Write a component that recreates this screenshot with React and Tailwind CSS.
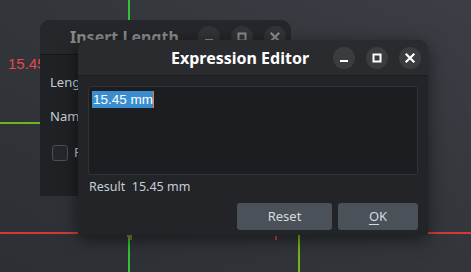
import React from 'react';

const font = { fontFamily: '"Noto Sans", "Open Sans", sans-serif' };

// small round title bar buttons (breeze style)
const WinButtons = ({ active }) => {
  const bg = active ? 'bg-[#3b3c40]' : 'bg-[#333438]';
  const stroke = active ? '#ffffff' : '#8d8e90';
  return (
    <div className="flex items-center gap-[11px]">
      <div className={`w-[22px] h-[22px] rounded-full ${bg} flex items-center justify-center`}>
        <svg width="12" height="12" viewBox="0 0 12 12">
          <rect x="2" y="8" width="8" height="2" fill={stroke} />
        </svg>
      </div>
      <div className={`w-[22px] h-[22px] rounded-full ${bg} flex items-center justify-center`}>
        <svg width="12" height="12" viewBox="0 0 12 12">
          <rect x="2.5" y="2.5" width="7" height="7" fill="none" stroke={stroke} strokeWidth="2" />
        </svg>
      </div>
      <div className={`w-[22px] h-[22px] rounded-full ${bg} flex items-center justify-center`}>
        <svg width="12" height="12" viewBox="0 0 12 12">
          <path d="M2.5 2.5 L9.5 9.5 M9.5 2.5 L2.5 9.5" stroke={stroke} strokeWidth="2.2" strokeLinecap="square" />
        </svg>
      </div>
    </div>
  );
};

const App = () => {
  return (
    <div
      className="relative w-[471px] h-[272px] overflow-hidden bg-gradient-to-tr from-[#2c2f34] via-[#32363b] to-[#3b3f45]"
      style={font}
    >
      {/* 3d view axis lines */}
      <div className="absolute left-[128px] top-0 w-[2px] h-[272px] bg-[#34c235]" />
      <div className="absolute left-0 top-[122px] w-[40px] h-[2px] bg-[#6fb51e]" />
      <div className="absolute left-0 top-[232px] w-[471px] h-[2px] bg-[#d23a3a]" />
      <div className="absolute left-[298px] top-[235px] w-[2px] h-[37px] bg-[#78b419]" />
      <div className="absolute left-[275px] top-[236px] w-[2px] h-[4px] bg-[#d63c3c]" />
      <div className="absolute left-[130px] top-[237px] w-[2px] h-[3px] bg-[#d63c3c]" />
      <div className="absolute left-[127px] top-[235px] w-[5px] h-[2px] bg-[#6a9a2a]" />

      <div
        className="absolute left-[8px] top-[53px] text-[15px] text-[#e8474b]"
        style={{ fontFamily: '"Liberation Sans", Arial, sans-serif' }}
      >
        15.45
      </div>

      {/* Insert Length (inactive, behind) */}
      <div className="absolute left-[40px] top-[20px] w-[251px] h-[176px] rounded-t-[10px] overflow-hidden bg-[#1f2124] flex flex-col">
        <div className="h-[35px] bg-[#26272a] border-b border-[#17181a] flex items-center justify-between pl-[30px] pr-[5px]">
          <span className="text-[16px] font-bold text-[#8a8b8d]">Insert Length</span>
          <WinButtons active={false} />
        </div>
        <div className="flex flex-col pl-[10px] pt-[17px] text-[13px] text-[#c8d0d8]">
          <div className="h-[20px] leading-[20px]">Length:</div>
          <div className="h-[20px] leading-[20px] mt-[14px]">Name:</div>
          <div className="flex items-center gap-[6px] mt-[17px] pl-[2px]">
            <div className="w-[16px] h-[16px] rounded-[3px] border border-[#4c4f54] bg-[#25272b]" />
            <span>Reference</span>
          </div>
        </div>
      </div>

      {/* Expression Editor (active) */}
      <div className="absolute left-[78px] top-[40px] w-[350px] h-[195px] rounded-t-[10px] overflow-hidden bg-[#222428] flex flex-col shadow-[0_4px_18px_rgba(0,0,0,0.55)]">
        <div className="h-[36px] bg-[#2a2b2f] border-b border-[#1a1b1e] flex items-center justify-between pl-[93px] pr-[7px]">
          <span className="text-[16px] font-bold text-white">Expression Editor</span>
          <WinButtons active />
        </div>
        <div className="flex flex-col px-[10px] pt-[10px]">
          <div className="h-[89px] rounded-[3px] border border-[#303238] bg-[#1b1d21] pl-[3px] pt-[4px]">
            <div className="flex">
              <span
                className="bg-[#3a8ed0] text-white text-[13.5px] leading-[17px] pl-[1px]"
                style={{ fontFamily: '"Liberation Sans", Arial, sans-serif' }}
              >
                15.45 mm
              </span>
              <span className="w-[1px] h-[17px] bg-[#f07a28]" />
            </div>
          </div>
          <div className="mt-[3px] h-[17px] text-[12.5px] leading-[17px] text-[#c5cfd8] pl-[1px]">
            Result&nbsp; 15.45 mm
          </div>
          <div className="flex justify-end gap-[6px] mt-[8px]">
            <button className="w-[95px] h-[27px] rounded-[3px] bg-[#4b5158] text-[13px] text-[#d5dadf]">
              Reset
            </button>
            <button className="w-[80px] h-[27px] rounded-[3px] bg-[#4b5158] text-[13px] text-[#d5dadf]">
              <span className="underline underline-offset-[3px]">O</span>K
            </button>
          </div>
        </div>
      </div>
    </div>
  );
};

export default App;
